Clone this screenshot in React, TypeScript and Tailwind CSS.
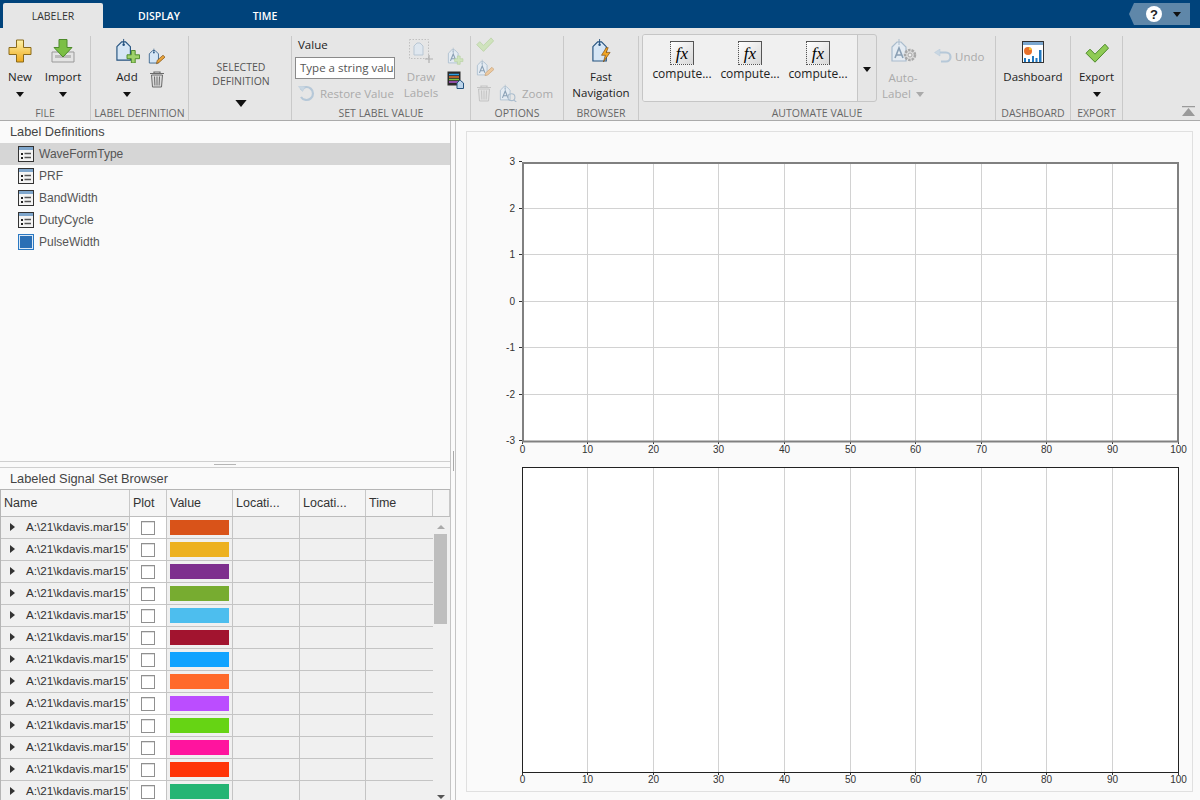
import type { ReactNode } from "react";

const SANS = "font-['Open_Sans','Noto_Sans',sans-serif]";

const Caret = ({ big = false, muted = false }: { big?: boolean; muted?: boolean }) => (
  <svg width={big ? 12 : 8} height={big ? 7 : 5} viewBox="0 0 8 5" className="block">
    <path d="M0 0h8L4 5z" fill={muted ? "#aaa" : "#111"} />
  </svg>
);

const PlusIcon = () => (
  <svg width="24" height="24" viewBox="0 0 24 24">
    <defs>
      <linearGradient id="plusg" x1="0" y1="0" x2="0" y2="1">
        <stop offset="0" stopColor="#fff3a8" />
        <stop offset="1" stopColor="#eea91c" />
      </linearGradient>
    </defs>
    <path d="M8.500 1h7v7.500H23v7h-7.500V23h-7v-7.500H1v-7h7.500z" fill="url(#plusg)" stroke="#8a6a1a" />
  </svg>
);

const ImportIcon = () => (
  <svg width="24" height="24" viewBox="0 0 24 24">
    <path d="M1 13h22v10H1z" fill="#e4e4e4" stroke="#999" />
    <path d="M4 16h16v3H4z" fill="#bbb" />
    <path d="M8 0.500h8v8h5L12 18 3 8.500h5z" fill="#7cbf45" stroke="#4d8a2a" />
  </svg>
);

const TagShape = ({ fill = "#d6e6f5", stroke = "#24527f" }: { fill?: string; stroke?: string }) => (
  <>
    <path d="M2 9l5-5h4l5 5v14H2z" fill={fill} stroke={stroke} strokeWidth="1.200" />
    <circle cx="9" cy="7" r="1.300" fill={stroke} />
    <path d="M9 7V1" stroke={stroke} />
  </>
);

const AddTagIcon = () => (
  <svg width="25" height="25" viewBox="0 0 26 26">
    <TagShape />
    <path d="M17 13h4v4.500h4.500v4H21V26h-4v-4.500h-4.500v-4H17z" fill="#9ed26a" stroke="#4d8a2a" />
  </svg>
);

const EditTagIcon = () => (
  <svg width="17" height="17" viewBox="0 0 26 26">
    <TagShape />
    <path d="M13 24l1-5 9-8 3 3-9 8z" fill="#e8a33a" stroke="#7a4a10" />
  </svg>
);

const TrashIcon = ({ muted = false }: { muted?: boolean }) => {
  const c = muted ? "#c4c4c4" : "#6a6a6a";
  return (
    <svg width="16" height="17" viewBox="0 0 16 17">
      <path d="M1 2.500h14M5 2.500V1h6v1.500" stroke={c} fill="none" strokeWidth="1.200" />
      <path d="M2.500 4h11l-1 12h-9z" fill={muted ? "#e2e2e2" : "#dcdcdc"} stroke={c} />
      <path d="M5.500 5.500l.4 9M8 5.500v9M10.500 5.500l-.4 9" stroke={c} />
    </svg>
  );
};

const LetterTag = ({ children, size = 18 }: { children?: ReactNode; size?: number }) => (
  <svg width={size} height={size} viewBox="0 0 26 26">
    <TagShape fill="#e4ebf2" stroke="#a9bccd" />
    <path d="M5 20l4-10 4 10M6.500 17h5" stroke="#8aa0b5" strokeWidth="1.600" fill="none" />
    {children}
  </svg>
);

const RestoreIcon = () => (
  <svg width="17" height="17" viewBox="0 0 17 17">
    <path d="M3 5a6.500 6.500 0 1 1 0 7" fill="none" stroke="#b6c8d8" strokeWidth="2.200" />
    <path d="M0.500 1.500h7l-3 5z" fill="#c9d7e3" stroke="#b6c8d8" strokeWidth="0.500" />
  </svg>
);

const DrawIcon = () => (
  <svg width="24" height="24" viewBox="0 0 24 24">
    <rect x="0.500" y="0.500" width="19" height="19" fill="none" stroke="#c0c0c0" strokeDasharray="1.500 1.500" />
    <path d="M5 7l3-3h3l3 3v9H5z" fill="#dfe7ef" stroke="#b9c7d4" />
    <path d="M20 16v8M16 20h8" stroke="#b0b0b0" strokeWidth="1.200" />
  </svg>
);

const BarsTagIcon = () => (
  <svg width="18" height="18" viewBox="0 0 18 18">
    <rect x="0.500" y="0.500" width="13" height="14" fill="#2a2a2a" />
    <path d="M2 3.500h10" stroke="#2f9fe0" strokeWidth="1.500" />
    <path d="M2 6h10" stroke="#e8702a" strokeWidth="1.500" />
    <path d="M2 8.500h10" stroke="#7fc241" strokeWidth="1.500" />
    <path d="M2 11h10" stroke="#b05ad0" strokeWidth="1.500" />
    <path d="M10 12l2.500-2.500h1L16.500 12v5.500H10z" fill="#bcd4ea" stroke="#24527f" />
  </svg>
);

const CheckIcon = ({ size = 24, muted = false }: { size?: number; muted?: boolean }) => (
  <svg width={size} height={size * 0.85} viewBox="0 0 24 20">
    <path
      d="M1 10l4-4 5 5L20 1l3.500 4L10 19z"
      fill={muted ? "#cfe3bd" : "#8fcb55"}
      stroke={muted ? "#b8d2a2" : "#4d8a2a"}
    />
  </svg>
);

const FastIcon = () => (
  <svg width="21" height="25" viewBox="0 0 22 26">
    <path d="M2 9l5-5h4l5 5v15H2z" fill="#d6e6f5" stroke="#24527f" strokeWidth="1.200" />
    <circle cx="9" cy="7" r="1.300" fill="#24527f" />
    <path d="M9 7V1" stroke="#24527f" />
    <path d="M16 10l-5 8h4l-2 7 7-10h-4l2-5z" fill="#f2a623" stroke="#7a4a10" strokeWidth="0.700" />
  </svg>
);

const FxIcon = () => (
  <div className="w-6 h-6 border border-[#555] [border-left-style:dotted] [border-bottom-style:dotted] bg-gradient-to-br from-white to-[#d8d8d8] flex items-center justify-center font-['Liberation_Serif',serif] italic text-[17px] leading-none text-black">
    fx
  </div>
);

const AutoIcon = () => (
  <svg width="27" height="25" viewBox="0 0 27 25">
    <path d="M2 9l5-5h4l5 5v14H2z" fill="#e4ebf2" stroke="#a9bccd" strokeWidth="1.200" />
    <path d="M9 7V1" stroke="#a9bccd" />
    <path d="M5 20l4-10 4 10M6.500 17h5" stroke="#8aa0b5" strokeWidth="1.600" fill="none" />
    <circle cx="20" cy="17" r="5" fill="#ddd" stroke="#a8a8a8" strokeWidth="2.500" strokeDasharray="2.500 1" />
    <circle cx="20" cy="17" r="2" fill="#eee" stroke="#a8a8a8" />
  </svg>
);

const UndoIcon = () => (
  <svg width="18" height="15" viewBox="0 0 18 15">
    <path d="M4 3.500h8a4.500 4.500 0 0 1 0 9H7" fill="none" stroke="#b6c8d8" strokeWidth="2.200" />
    <path d="M6 0L.5 3.500 6 7z" fill="#c9d7e3" stroke="#b6c8d8" strokeWidth="0.500" />
  </svg>
);

const DashIcon = () => (
  <svg width="22" height="22" viewBox="0 0 22 22">
    <rect x="0.500" y="0.500" width="21" height="21" fill="#fff" stroke="#333" />
    <rect x="1" y="1" width="20" height="3" fill="#7ba7cf" />
    <circle cx="6" cy="10" r="4" fill="#e8702a" />
    <path d="M7 9V6a4 4 0 0 1 3 3z" fill="#f2c230" />
    <path d="M2 17h2v4H2zM6 18h2v3H6zM10 15h2v6h-2zM13.500 17h2v4h-2zM17 9h2.500v12H17z" fill="#1f78c1" />
  </svg>
);

const ListIcon = () => (
  <svg width="16" height="16" viewBox="0 0 16 16" className="shrink-0">
    <rect x="0.500" y="0.500" width="15" height="15" fill="#f4f4f4" stroke="#333" />
    <rect x="1" y="1" width="14" height="3" fill="#7fa6cc" />
    <path d="M3 7h2v2H3zM3 11h2v2H3z" fill="#222" />
    <path d="M6.500 7.500H13M6.500 11.500H13" stroke="#555" strokeWidth="1.400" />
  </svg>
);

const SwatchIcon = () => (
  <div className="w-4 h-4 shrink-0 border border-[#2a78c2] bg-[#2a6fb5] outline-1 -outline-offset-2 outline-[#dbe9f6]" />
);

function BigButton({
  icon,
  lines,
  caret,
  muted,
  width,
}: {
  icon: ReactNode;
  lines: string[];
  caret?: boolean;
  muted?: boolean;
  width: string;
}) {
  return (
    <div className={`${width} flex flex-col items-center`}>
      <div className="h-[27px] flex items-end justify-center">{icon}</div>
      <div className={`mt-[6px] flex flex-col items-center leading-[16px] ${muted ? "text-[#aaa]" : "text-[#222]"}`}>
        {lines.map((l) => (
          <span key={l} className="whitespace-nowrap">
            {l}
          </span>
        ))}
      </div>
      {caret && (
        <div className="mt-[7px]">
          <Caret />
        </div>
      )}
    </div>
  );
}

function Section({
  title,
  width,
  children,
  className = "",
}: {
  title: string;
  width: string;
  children: ReactNode;
  className?: string;
}) {
  return (
    <section className={`${width} shrink-0 flex flex-col border-r border-[#c9c9c9]`}>
      <div className={`flex-1 min-h-0 flex ${className}`}>{children}</div>
      <div className="h-[14px] shrink-0 text-center text-[10.500px] leading-[14px] text-[#666] whitespace-nowrap">{title}</div>
    </section>
  );
}

function Ribbon() {
  return (
    <div className={`h-[93px] shrink-0 bg-[#e6e6e6] border-b border-[#ababab] pt-2 flex relative text-[11.500px] ${SANS}`}>
      <Section title="FILE" width="w-[91px]" className="pl-[1px]">
        <BigButton width="w-[38px]" icon={<PlusIcon />} lines={["New"]} caret />
        <BigButton width="w-[48px]" icon={<ImportIcon />} lines={["Import"]} caret />
      </Section>
      <Section title="LABEL DEFINITION" width="w-[98px]" className="pl-[16px] gap-[1px]">
        <BigButton width="w-[40px]" icon={<AddTagIcon />} lines={["Add"]} caret />
        <div className="flex flex-col gap-[6px] pt-[12px] items-center">
          <EditTagIcon />
          <TrashIcon />
        </div>
      </Section>
      <Section title="" width="w-[103px]" className="flex-col items-center pl-[2px] pt-[24px] text-[#555] text-[10.500px]">
        <span className="leading-[14px]">SELECTED</span>
        <span className="leading-[14px]">DEFINITION</span>
        <div className="mt-[12px]">
          <Caret big />
        </div>
      </Section>
      <Section title="SET LABEL VALUE" width="w-[179px]" className="pl-[3px]">
        <div className="w-[104px] flex flex-col">
          <span className="pl-[3px] mt-[1px] leading-[16px] text-[#222]">Value</span>
          <div className="mt-[4px] w-[100px] h-[22px] border border-[#8a8a8a] bg-white pl-[4px] leading-[19px] text-[#555] overflow-hidden whitespace-nowrap">
            Type a string value
          </div>
          <div className="mt-[6px] pl-[3px] flex items-center gap-[5px] text-[#aaa] whitespace-nowrap">
            <RestoreIcon />
            Restore Value
          </div>
        </div>
        <BigButton width="w-[44px]" icon={<DrawIcon />} lines={["Draw", "Labels"]} muted />
        <div className="flex flex-col gap-[6px] pt-[11px] pl-[4px]">
          <LetterTag>
            <path d="M15 13h4v4h4v4h-4v4h-4v-4h-4v-4h4z" fill="#cfe3bd" stroke="#b8d2a2" />
          </LetterTag>
          <BarsTagIcon />
        </div>
      </Section>
      <Section title="OPTIONS" width="w-[93px]" className="flex-col pl-[5px] pt-[1px]">
        <CheckIcon size={18} muted />
        <div className="mt-[7px]">
          <LetterTag>
            <path d="M13 24l1-4 9-8 3 3-9 8z" fill="#ecc9a0" stroke="#c9a47a" />
          </LetterTag>
        </div>
        <div className="mt-[7px] flex items-center gap-[7px] text-[#aaa]">
          <TrashIcon muted />
          <div className="flex items-center gap-[5px]">
            <LetterTag>
              <circle cx="18" cy="19" r="5" fill="none" stroke="#a9bccd" strokeWidth="1.500" />
              <path d="M21 23l4 3" stroke="#a9bccd" strokeWidth="1.500" />
            </LetterTag>
            Zoom
          </div>
        </div>
      </Section>
      <Section title="BROWSER" width="w-[75px]">
        <BigButton width="w-full" icon={<FastIcon />} lines={["Fast", "Navigation"]} />
      </Section>
      <Section title="AUTOMATE VALUE" width="w-[357px]" className="pl-[3px]">
        <div className="w-[235px] h-[68px] -mt-[2px] border border-[#c6c6c6] rounded-[3px] flex overflow-hidden">
          <div className="flex-1 bg-[#f0f0f0] flex pl-[5px] pt-[6px]">
            {[0, 1, 2].map((i) => (
              <div key={i} className="w-[68px] flex flex-col items-center text-[#222] text-[12px] leading-[16px]">
                <FxIcon />
                <span className="mt-[1px]">compute...</span>
              </div>
            ))}
          </div>
          <div className="w-[19px] border-l border-[#c6c6c6] flex justify-center pt-[32px]">
            <Caret />
          </div>
        </div>
        <div className="w-[52px] flex flex-col items-center text-[#aaa] leading-[16px]">
          <div className="h-[27px] flex items-end">
            <AutoIcon />
          </div>
          <span className="mt-[7px]">Auto-</span>
          <span className="flex items-center gap-[5px]">
            Label <Caret muted />
          </span>
        </div>
        <div className="ml-[5px] pt-[13px] flex items-start gap-[3px] text-[#aaa] leading-[16px]">
          <UndoIcon />
          Undo
        </div>
      </Section>
      <Section title="DASHBOARD" width="w-[75px]">
        <BigButton width="w-full" icon={<DashIcon />} lines={["Dashboard"]} />
      </Section>
      <Section title="EXPORT" width="w-[52px]">
        <BigButton width="w-full" icon={<CheckIcon />} lines={["Export"]} caret />
      </Section>
      <svg width="13" height="11" viewBox="0 0 13 11" className="absolute right-[5px] bottom-[3px]">
        <path d="M0 0.500h13" stroke="#9a9a9a" strokeWidth="1.500" />
        <path d="M6.500 2L13 10H0z" fill="#9a9a9a" />
      </svg>
    </div>
  );
}

const definitions = [
  { name: "WaveFormType", selected: true },
  { name: "PRF" },
  { name: "BandWidth" },
  { name: "DutyCycle" },
  { name: "PulseWidth", swatch: true },
];

const colors = [
  "#d95319",
  "#edb120",
  "#7e2f8e",
  "#77ac30",
  "#4dbeee",
  "#a2142f",
  "#11a3ff",
  "#ff6a2b",
  "#bb4dff",
  "#66d414",
  "#ff149e",
  "#ff3508",
  "#25b574",
];

function SignalTable() {
  return (
    <div className="flex-1 min-h-0 border-l border-t border-[#b5b5b5] overflow-hidden relative text-[#333]">
      <div className="h-[27px] bg-[#f5f5f5] border-b border-[#bdbdbd] grid grid-cols-[129px_37px_66px_67px_66px_67px_17px] text-[12.500px] leading-[26px]">
        {["Name", "Plot", "Value", "Locati...", "Locati...", "Time", ""].map((h, i) => (
          <div key={i} className="px-[3px] border-r border-[#c8c8c8] whitespace-nowrap">
            {h}
          </div>
        ))}
      </div>
      {colors.map((c) => (
        <div
          key={c}
          className="h-[22px] grid grid-cols-[129px_37px_66px_67px_66px_67px] border-b border-[#c4c4c4] w-[432px]"
        >
          <div className="bg-[#f0f0f0] border-r border-[#c4c4c4] flex items-center pl-[9px] pb-[1px] overflow-hidden whitespace-nowrap text-[11.700px]">
            <svg width="5" height="8" viewBox="0 0 5 8" className="shrink-0">
              <path d="M0 0l5 4-5 4z" fill="#333" />
            </svg>
            <span className="ml-[11px]">A:\21\kdavis.mar15'</span>
          </div>
          <div className="bg-white border-r border-[#c4c4c4] flex items-center justify-center">
            <div className="w-[14px] h-[14px] bg-white border border-[#909090] shadow-[inset_0_1px_0_#e0e0e0]" />
          </div>
          <div className="bg-[#f0f0f0] border-r border-[#c4c4c4] px-[3px] py-[3px]">
            <div className="h-[15px] w-[59px]" style={{ backgroundColor: c }} />
          </div>
          <div className="bg-[#f0f0f0] border-r border-[#c4c4c4]" />
          <div className="bg-[#f0f0f0] border-r border-[#c4c4c4]" />
          <div className="bg-[#f0f0f0]" />
        </div>
      ))}
      <div className="absolute right-0 top-[27px] bottom-0 w-[17px] pr-[2px] bg-[#f0f0f0] flex flex-col items-center">
        <svg width="8" height="4" viewBox="0 0 8 4" className="mt-[8px]">
          <path d="M4 0l4 4H0z" fill="#aaa" />
        </svg>
        <div className="mt-[5px] w-[13px] h-[90px] bg-[#bebebe]" />
        <svg width="8" height="4" viewBox="0 0 8 4" className="mt-auto mb-[1px]">
          <path d="M0 0h8L4 4z" fill="#555" />
        </svg>
      </div>
    </div>
  );
}

const X0 = 55;
const W = 656;
const xTicks = Array.from({ length: 11 }, (_, i) => i * 10);
const yTicks = [3, 2, 1, 0, -1, -2, -3];

function Charts() {
  const y1Top = 30;
  const y1H = 279;
  const y2Top = 335;
  const y2H = 305;
  return (
    <svg width="724" height="659" viewBox="0 0 724 659" className="block">
      <rect x={X0} y={y1Top} width={W} height={y1H} fill="#fff" />
      <rect x={X0} y={y2Top} width={W} height={y2H} fill="#fff" />
      {xTicks.map((t) => {
        const x = Math.floor(X0 + (t / 100) * W) + 0.5;
        return (
          <g key={t}>
            {t > 0 && t < 100 && (
              <>
                <path d={`M${x} ${y1Top}V${y1Top + y1H}`} stroke="#d2d2d2" />
                <path d={`M${x} ${y2Top}V${y2Top + y2H}`} stroke="#d2d2d2" />
              </>
            )}
            <path d={`M${x} ${y1Top + y1H}v3`} stroke="#333" />
            <path d={`M${x} ${y2Top + y2H}v3`} stroke="#333" />
            <text x={x} y={y1Top + y1H + 12} textAnchor="middle" fontSize="10" fill="#333" fontFamily="Liberation Sans">
              {t}
            </text>
            <text x={x} y={y2Top + y2H + 11} textAnchor="middle" fontSize="10" fill="#333" fontFamily="Liberation Sans">
              {t}
            </text>
          </g>
        );
      })}
      {yTicks.map((t, i) => {
        const y = Math.floor(y1Top + (i * y1H) / 6 - 0.5) + 0.5;
        return (
          <g key={t}>
            {i > 0 && i < 6 && <path d={`M${X0} ${y}H${X0 + W}`} stroke="#d2d2d2" />}
            <path d={`M${X0 - 3} ${y}H${X0}`} stroke="#333" />
            <text x={X0 - 7} y={y + 3.500} textAnchor="end" fontSize="10" fill="#333" fontFamily="Liberation Sans">
              {t}
            </text>
          </g>
        );
      })}
      <rect x={X0 + 1} y={y1Top + 1} width={W - 1} height={y1H - 0.5} fill="none" stroke="#808080" strokeWidth="2" />
      <rect x={X0 + 0.5} y={y2Top + 0.5} width={W} height={y2H} fill="none" stroke="#222" strokeWidth="1" />
    </svg>
  );
}

export default function App() {
  return (
    <div className="w-[1200px] h-[800px] overflow-hidden flex flex-col bg-[#fafafa] font-['Liberation_Sans',Arial,sans-serif]">
      <header className={`h-[28px] shrink-0 bg-[#00437b] flex items-end pl-[3px] text-[10.500px] ${SANS}`}>
        <div className="w-[100px] h-[25px] bg-[#e6e6e6] rounded-t-[2px] text-center leading-[27px] text-[#333]">LABELER</div>
        <div className="w-[112px] h-[25px] text-center leading-[27px] text-white font-semibold">DISPLAY</div>
        <div className="w-[100px] h-[25px] text-center leading-[27px] text-white font-semibold">TIME</div>
        <div className="ml-auto mb-[3px] mr-[10px] w-[61px] h-[22px] bg-[#5f87a9] [clip-path:polygon(5px_0,100%_0,100%_100%,5px_100%,0_50%)] flex items-center pl-[17px] gap-[11px]">
          <div className="w-[16px] h-[16px] rounded-full bg-white flex items-center justify-center text-[13px] font-bold text-[#222] leading-none font-['Liberation_Sans',sans-serif]">
            ?
          </div>
          <Caret />
        </div>
      </header>
      <Ribbon />
      <main className="flex-1 min-h-0 flex">
        <div className="w-[451px] shrink-0 border-r border-[#c4c4c4] flex flex-col">
          <div className="h-[340px] shrink-0 text-[12px] text-[#555]">
            <div className="h-[22px] pl-[10px] text-[12.800px] leading-[22px] text-[#444]">Label Definitions</div>
            {definitions.map((d) => (
              <div
                key={d.name}
                className={`h-[22px] flex items-center gap-[5px] pl-[18px] ${d.selected ? "bg-[#d6d6d6]" : ""}`}
              >
                {d.swatch ? <SwatchIcon /> : <ListIcon />}
                <span>{d.name}</span>
              </div>
            ))}
          </div>
          <div className="h-[7px] shrink-0 border-y border-[#cfcfcf] flex justify-center pt-[2px]">
            <div className="w-[22px] h-px bg-[#b5b5b5]" />
          </div>
          <div className="h-[21px] shrink-0 pl-[10px] text-[12.800px] leading-[22px] text-[#444]">Labeled Signal Set Browser</div>
          <SignalTable />
        </div>
        <div className="w-[4px] shrink-0 flex items-center justify-center">
          <div className="w-px h-[20px] bg-[#aaa]" />
        </div>
        <div className="flex-1 min-w-0 border-l border-[#c4c4c4] pl-[10px] pr-[7px] pt-[10px] pb-[7px]">
          <div className="border border-[#e0e0e0] bg-[#fafafa] w-[727px]">
            <Charts />
          </div>
        </div>
      </main>
    </div>
  );
}
